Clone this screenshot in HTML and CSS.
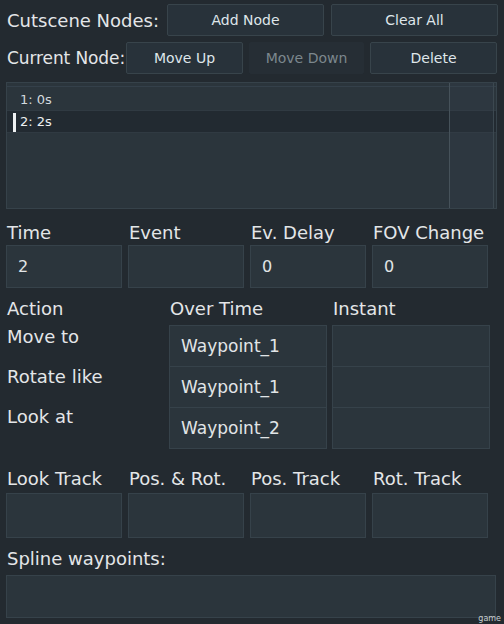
FILE: index.html
```html
<!DOCTYPE html>
<html lang="en">
<head>
  <meta charset="UTF-8">
  <meta name="viewport" content="width=device-width, initial-scale=1.0">
  <title>Cutscene Editor</title>
  <link rel="stylesheet" href="styles.css">
</head>
<body>
  <div class="panel">
    <div class="toolbar">
      <span class="label nodes-label">Cutscene Nodes:</span>
      <button class="btn btn-add">Add Node</button>
      <button class="btn btn-clear">Clear All</button>
    </div>
    <div class="toolbar second">
      <span class="label current-label">Current Node:</span>
      <button class="btn btn-up">Move Up</button>
      <button class="btn btn-down" disabled>Move Down</button>
      <button class="btn btn-delete">Delete</button>
    </div>

    <div class="node-list">
      <div class="list-head"></div>
      <div class="list-items">
        <div class="list-item">1: 0s</div>
        <div class="list-item selected">2: 2s</div>
      </div>
      <div class="scrollbar"></div>
    </div>

    <div class="field-grid labels">
      <span class="label">Time</span>
      <span class="label">Event</span>
      <span class="label">Ev. Delay</span>
      <span class="label">FOV Change</span>
    </div>
    <div class="field-grid">
      <div class="field">2</div>
      <div class="field"></div>
      <div class="field">0</div>
      <div class="field">0</div>
    </div>

    <div class="action-grid">
      <span class="label">Action</span>
      <span class="label">Over Time</span>
      <span class="label">Instant</span>
      <div class="action-names">
        <span class="label">Move to</span>
        <span class="label">Rotate like</span>
        <span class="label">Look at</span>
      </div>
      <div class="cells">
        <div class="cell">Waypoint_1</div>
        <div class="cell">Waypoint_1</div>
        <div class="cell">Waypoint_2</div>
      </div>
      <div class="cells">
        <div class="cell"></div>
        <div class="cell"></div>
        <div class="cell"></div>
      </div>
    </div>

    <div class="field-grid labels tracks">
      <span class="label">Look Track</span>
      <span class="label">Pos. &amp; Rot.</span>
      <span class="label">Pos. Track</span>
      <span class="label">Rot. Track</span>
    </div>
    <div class="field-grid">
      <div class="field tall"></div>
      <div class="field tall"></div>
      <div class="field tall"></div>
      <div class="field tall"></div>
    </div>

    <div class="label spline-label">Spline waypoints:</div>
    <div class="spline-box"></div>
  </div>
  <span class="watermark">game</span>
</body>
</html>
```

FILE: styles.css
```css
body {
  margin: 0;
  background-color: #232a30;
  font-family: "DejaVu Sans", Arial, sans-serif;
  color: #e1e5e7;
  width: 504px;
  height: 624px;
  overflow: hidden;
  position: relative;
}

.panel {
  padding: 4px 7px 0 6px;
}

.label {
  font-size: 18px;
  color: #e3e6e8;
  white-space: nowrap;
}

.toolbar {
  display: flex;
  align-items: center;
  height: 32px;
}

.toolbar.second {
  margin-top: 6px;
}

.nodes-label {
  flex: none;
  width: 160px;
  padding-left: 1px;
}

.current-label {
  flex: none;
  width: 119px;
  padding-left: 1px;
  font-size: 17px;
  letter-spacing: -0.1px;
}

.btn {
  flex: none;
  height: 32px;
  background: #28323a;
  border: 1px solid #38444b;
  border-radius: 2px;
  color: #dfe6ea;
  font-family: inherit;
  font-size: 14px;
  padding: 0;
  cursor: pointer;
}

.btn-add { width: 157px; }
.btn-clear { width: 167px; margin-left: 7px; }
.btn-up { width: 117px; }
.btn-down {
  width: 115px;
  margin-left: 6px;
  background: #262e35;
  border-color: #262e35;
  color: #7c878d;
}
.btn-delete { width: 127px; margin-left: 6px; }

.node-list {
  position: relative;
  margin-top: 8px;
  height: 125px;
  border: 1px solid #36424a;
  background: #2b353c;
}

.list-head {
  height: 3px;
  border-bottom: 1px solid #34404a;
}

.list-items {
  padding-top: 2px;
}

.list-item {
  height: 21px;
  line-height: 21px;
  font-size: 13px;
  padding-left: 13px;
  color: #d3dade;
  border-bottom: 1px solid #303a42;
}

.list-item.selected {
  background: #222a31;
  color: #eef1f2;
  padding-left: 6px;
}

.list-item.selected::before {
  content: "";
  display: inline-block;
  width: 3px;
  height: 19px;
  margin-right: 4px;
  vertical-align: middle;
  background: #eef1f2;
}

.scrollbar {
  position: absolute;
  top: 0;
  bottom: 0;
  right: 2px;
  width: 43px;
  border-left: 1px solid #46525a;
  border-right: 1px solid #3c4850;
  background: rgba(50, 62, 74, 0.25);
}

.field-grid {
  display: grid;
  grid-template-columns: repeat(4, 116px);
  column-gap: 6px;
}

.field-grid.labels {
  height: 26px;
  margin-top: 10px;
  align-items: center;
}

.field-grid.labels .label {
  padding-left: 1px;
}

.field {
  height: 41px;
  border: 1px solid #36424a;
  background: #2b353c;
  font-size: 16px;
  line-height: 41px;
  padding-left: 11px;
}

.field.tall {
  height: 43px;
}

.action-grid {
  display: grid;
  grid-template-columns: 158px 158px 158px;
  column-gap: 5px;
  margin-top: 9px;
}

.action-grid > .label {
  height: 24px;
  line-height: 24px;
  padding-left: 1px;
  margin-bottom: 4px;
}

.action-names {
  display: flex;
  flex-direction: column;
}

.action-names .label {
  height: 40px;
  line-height: 24px;
  padding-left: 1px;
}

.cells {
  border: 1px solid #36424a;
  background: #2b353c;
}

.cell {
  height: 40px;
  line-height: 40px;
  border-bottom: 1px solid #36424a;
  font-size: 17px;
  padding-left: 11px;
}

.cell:last-child {
  border-bottom: none;
}

.field-grid.tracks {
  margin-top: 14px;
  height: 30px;
}

.spline-label {
  margin-top: 8px;
  height: 26px;
  line-height: 26px;
  padding-left: 1px;
}

.spline-box {
  margin-top: 3px;
  width: 488px;
  height: 41px;
  border: 1px solid #36424a;
  background: #2b353c;
}

.watermark {
  position: absolute;
  right: 3px;
  bottom: 1px;
  font-size: 8px;
  color: #c9cfd2;
}
```
